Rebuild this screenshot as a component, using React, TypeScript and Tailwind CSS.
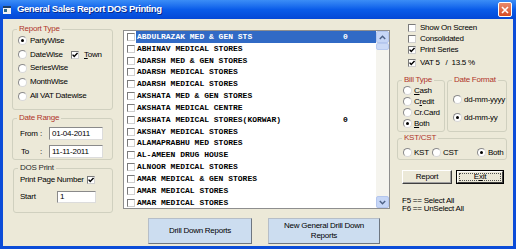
import type { ReactNode } from 'react';

const parties = [
  { name: 'ABDULRAZAK MED & GEN STS', val: '0', sel: true },
  { name: 'ABHINAV MEDICAL STORES', val: '' },
  { name: 'ADARSH MED & GEN STORES', val: '' },
  { name: 'ADARSH MEDICAL STORES', val: '' },
  { name: 'ADARSH MEDICAL STORES', val: '' },
  { name: 'AKSHATA MED & GEN STORES', val: '' },
  { name: 'AKSHATA MEDICAL CENTRE', val: '' },
  { name: 'AKSHATA MEDICAL STORES(KORWAR)', val: '0' },
  { name: 'AKSHAY MEDICAL STORES', val: '' },
  { name: 'ALAMAPRABHU MED STORES', val: '' },
  { name: 'AL-AMEEN DRUG HOUSE', val: '' },
  { name: 'ALNOOR MEDICAL STORES', val: '' },
  { name: 'AMAR MEDICAL & GEN STORES', val: '' },
  { name: 'AMAR MEDICAL STORES', val: '' },
  { name: 'AMAR MEDICAL STORES', val: '' },
];

function Radio({ on }: { on?: boolean }) {
  return (
    <span className="w-[9px] h-[9px] rounded-full border border-[#8A8A8A] border-r-[#D8D8D8] border-b-[#D8D8D8] bg-white flex items-center justify-center shrink-0">
      {on && <span className="w-[3px] h-[3px] rounded-full bg-black" />}
    </span>
  );
}

function Check({ on }: { on?: boolean }) {
  return (
    <span className="w-[8px] h-[8px] border border-[#7A7A7A] border-r-[#CFCFCF] border-b-[#CFCFCF] bg-white flex items-center justify-center shrink-0">
      {on && (
        <svg width="6" height="6" viewBox="0 0 6 6">
          <path d="M0.6 2.6 L2.2 4.4 L5.5 0.9" stroke="black" strokeWidth="1.4" fill="none" />
        </svg>
      )}
    </span>
  );
}

function Group({ title, red, className, children }: { title: string; red?: boolean; className?: string; children?: ReactNode }) {
  return (
    <fieldset className={`border border-[#D0D0BF] rounded-[3px] p-0 m-0 min-w-0 ${className ?? ''}`}>
      <legend className={`ml-[4px] px-[2px] text-[8px] leading-[10px] ${red ? 'text-[#B0352A]' : 'text-[#2A2A2A]'}`}>
        {title}
      </legend>
      {children}
    </fieldset>
  );
}

function Field({ value, className }: { value: string; className?: string }) {
  return (
    <div className={`bg-white border border-[#8A8A8A] border-r-[#DCDCDC] border-b-[#DCDCDC] flex items-center pl-[2px] text-[8px] ${className ?? ''}`}>
      {value}
    </div>
  );
}

export default function App() {
  return (
    <div className="w-[516px] h-[249px] flex flex-col overflow-hidden font-['Liberation_Sans',Arial,sans-serif] text-black tracking-[-0.25px]">
      {/* title bar */}
      <div className="h-[19px] shrink-0 flex items-center bg-gradient-to-b from-[#3B8DF6] via-[#0A5CE9] to-[#0548D6] pl-[3px] pr-[4px]">
        <svg width="8" height="8" viewBox="0 0 8 8" className="shrink-0">
          <rect x="0" y="0" width="8" height="8" fill="#F2F2F2" />
          <rect x="0" y="0" width="8" height="2" fill="#1E3F66" />
          <rect x="1" y="3" width="3" height="3" fill="#2E6B8A" />
        </svg>
        <span className="ml-[6px] text-white font-bold text-[9.5px] tracking-[-0.4px] [text-shadow:1px_1px_0_#0A2A8A]">
          General Sales Report DOS Printing
        </span>
        <div className="ml-auto w-[14px] h-[15px] rounded-[2px] border border-white bg-gradient-to-b from-[#E98A6C] to-[#D64A22] flex items-center justify-center">
          <svg width="8" height="8" viewBox="0 0 8 8">
            <path d="M1 1 L7 7 M7 1 L1 7" stroke="white" strokeWidth="1.6" />
          </svg>
        </div>
      </div>

      {/* body */}
      <div className="flex-1 flex flex-col bg-[#ECE9D8] border-x-[3px] border-b-[3px] border-[#0B4CD8]">
        <div className="flex h-[199px] shrink-0">
          {/* left column */}
          <div className="ml-[9px] w-[101px] flex flex-col">
            <Group title="Report Type" red className="mt-[5px] h-[86px]">
              <div className="flex flex-col pl-[5px]">
                <div className="h-[13.8px] flex items-center gap-[3px] text-[8px]"><Radio on />PartyWise</div>
                <div className="h-[13.8px] flex items-center text-[8px]">
                  <Radio /><span className="ml-[3px] w-[41px]">DateWise</span>
                  <Check on /><span className="ml-[5px]"><u>T</u>own</span>
                </div>
                <div className="h-[13.8px] flex items-center gap-[3px] text-[8px]"><Radio />SeriesWise</div>
                <div className="h-[13.8px] flex items-center gap-[3px] text-[8px]"><Radio />MonthWise</div>
                <div className="h-[13.8px] flex items-center gap-[3px] text-[8px]"><Radio />All VAT Datewise</div>
              </div>
            </Group>
            <Group title="Date Range" red className="mt-[3px] h-[47px]">
              <div className="flex flex-col pl-[7px] pt-[4px] gap-[5px] text-[8px]">
                <div className="flex items-center h-[13px]">
                  <span className="w-[20px]">From</span><span className="w-[9px]">:</span>
                  <Field value="01-04-2011" className="w-[54px] h-[13px]" />
                </div>
                <div className="flex items-center h-[13px]">
                  <span className="w-[20px] pl-[1px]">To</span><span className="w-[9px]">:</span>
                  <Field value="11-11-2011" className="w-[54px] h-[13px]" />
                </div>
              </div>
            </Group>
            <Group title="DOS Print" className="mt-[3px] ml-[1px] h-[50px]">
              <div className="flex flex-col pl-[6px] text-[8px]">
                <div className="flex items-center h-[12px] mt-[1px]">
                  <span className="w-[67px]">Print Page Number</span>
                  <Check on />
                </div>
                <div className="flex items-center h-[12px] mt-[5px]">
                  <span className="w-[37px]">Start</span>
                  <Field value="1" className="w-[39px] h-[12px]" />
                </div>
              </div>
            </Group>
          </div>

          {/* party list */}
          <div className="ml-[10px] mt-[11px] w-[267px] h-[179px] bg-white border border-[#8E8E8E] flex">
            <div className="flex-1 flex flex-col font-['Liberation_Mono',monospace] font-bold text-[8px] tracking-normal">
              {parties.map((p, i) => (
                <div key={i} className="h-[11.84px] flex items-center shrink-0">
                  <span className="ml-[3px]"><Check /></span>
                  <div className={`ml-[1px] flex-1 h-full flex items-center pl-[1px] ${p.sel ? 'bg-[#316AC5] text-white' : ''}`}>
                    <span className="w-[206px] whitespace-pre">{p.name}</span>
                    <span>{p.val}</span>
                  </div>
                </div>
              ))}
            </div>
            <div className="w-[13px] bg-[#F5F4EE] flex flex-col">
              <div className="h-[12px] bg-[#C6D6F6] border border-[#B4C6EE] rounded-[2px] flex items-center justify-center">
                <svg width="7" height="5" viewBox="0 0 7 5"><path d="M0.8 4 L3.5 1.2 L6.2 4" stroke="#4D6185" strokeWidth="1.4" fill="none" /></svg>
              </div>
              <div className="h-[7px] bg-[#CCDAF6] border border-[#B8CAF0] rounded-[2px]" />
              <div className="flex-1" />
              <div className="h-[12px] bg-[#C6D6F6] border border-[#B4C6EE] rounded-[2px] flex items-center justify-center">
                <svg width="7" height="5" viewBox="0 0 7 5"><path d="M0.8 1 L3.5 3.8 L6.2 1" stroke="#4D6185" strokeWidth="1.4" fill="none" /></svg>
              </div>
            </div>
          </div>

          {/* right column */}
          <div className="ml-[7px] w-[110px] flex flex-col text-[8px]">
            <div className="mt-[3px] pl-[11px] flex flex-col">
              <div className="h-[11px] flex items-center gap-[4px]"><Check />Show On Screen</div>
              <div className="h-[11px] flex items-center gap-[4px]"><Check />Consolidated</div>
              <div className="h-[11px] flex items-center gap-[4px]"><Check on />Print Series</div>
              <div className="h-[11px] mt-[2px] flex items-center gap-[4px]"><Check on /><span className="whitespace-pre">VAT 5   /  13.5 %</span></div>
            </div>
            <div className="mt-[7px] flex gap-[2px]">
              <Group title="Bill Type" red className="w-[48px] h-[57px]">
                <div className="flex flex-col pl-[5px]">
                  <div className="h-[11px] flex items-center gap-[2px]"><Radio /><span><u>C</u>ash</span></div>
                  <div className="h-[11px] flex items-center gap-[2px]"><Radio /><span>C<u>r</u>edit</span></div>
                  <div className="h-[11px] flex items-center gap-[2px]"><Radio /><span>Cr.Card</span></div>
                  <div className="h-[11px] flex items-center gap-[2px]"><Radio on /><span><u>B</u>oth</span></div>
                </div>
              </Group>
              <Group title="Date Format" red className="w-[60px] h-[57px]">
                <div className="flex flex-col pl-[5px]">
                  <div className="h-[11px] mt-[9px] flex items-center gap-[2px]"><Radio />dd-mm-yyyy</div>
                  <div className="h-[11px] mt-[7px] flex items-center gap-[2px]"><Radio on />dd-mm-yy</div>
                </div>
              </Group>
            </div>
            <Group title="KST/CST" red className="mt-[1px] w-[110px] h-[27px]">
              <div className="flex items-center h-[11px] mt-[4px] pl-[5px]">
                <Radio /><span className="ml-[2px] w-[18px]">KST</span>
                <Radio /><span className="ml-[2px] w-[34px]">CST</span>
                <Radio on /><span className="ml-[2px]">Both</span>
              </div>
            </Group>
            <div className="mt-[10px] pl-[5px] flex gap-[4px]">
              <div className="w-[50px] h-[14px] flex items-center justify-center bg-[#ECE9D8] border border-white border-r-[#404040] border-b-[#404040] shadow-[inset_-1px_-1px_0_#A0A0A0]">
                Report
              </div>
              <div className="relative w-[48px] h-[14px] border border-black">
                <div className="absolute inset-0 border border-white border-r-[#404040] border-b-[#404040]" />
                <div className="absolute inset-[2px] border border-dotted border-[#505050]" />
                <div className="absolute inset-0 flex items-center justify-center">
                  E<u>x</u>it
                </div>
              </div>
            </div>
            <div className="mt-[13px] pl-[5px] leading-[8px]">
              <div>F5 == Select All</div>
              <div>F6 == UnSelect All</div>
            </div>
          </div>
        </div>

        {/* bottom buttons */}
        <div className="flex pl-[145px] gap-[16px] text-[8px]">
          <div className="w-[104px] h-[26px] flex items-center justify-center bg-[#CCDDF0] border border-[#B6BEC8] border-r-[#6E7680] border-b-[#6E7680]">
            Drill Down Reports
          </div>
          <div className="w-[112px] h-[26px] flex items-center justify-center text-center leading-[10px] bg-[#CCDDF0] border border-[#B6BEC8] border-r-[#6E7680] border-b-[#6E7680]">
            New General Drill Down<br />Reports
          </div>
        </div>
      </div>
    </div>
  );
}
